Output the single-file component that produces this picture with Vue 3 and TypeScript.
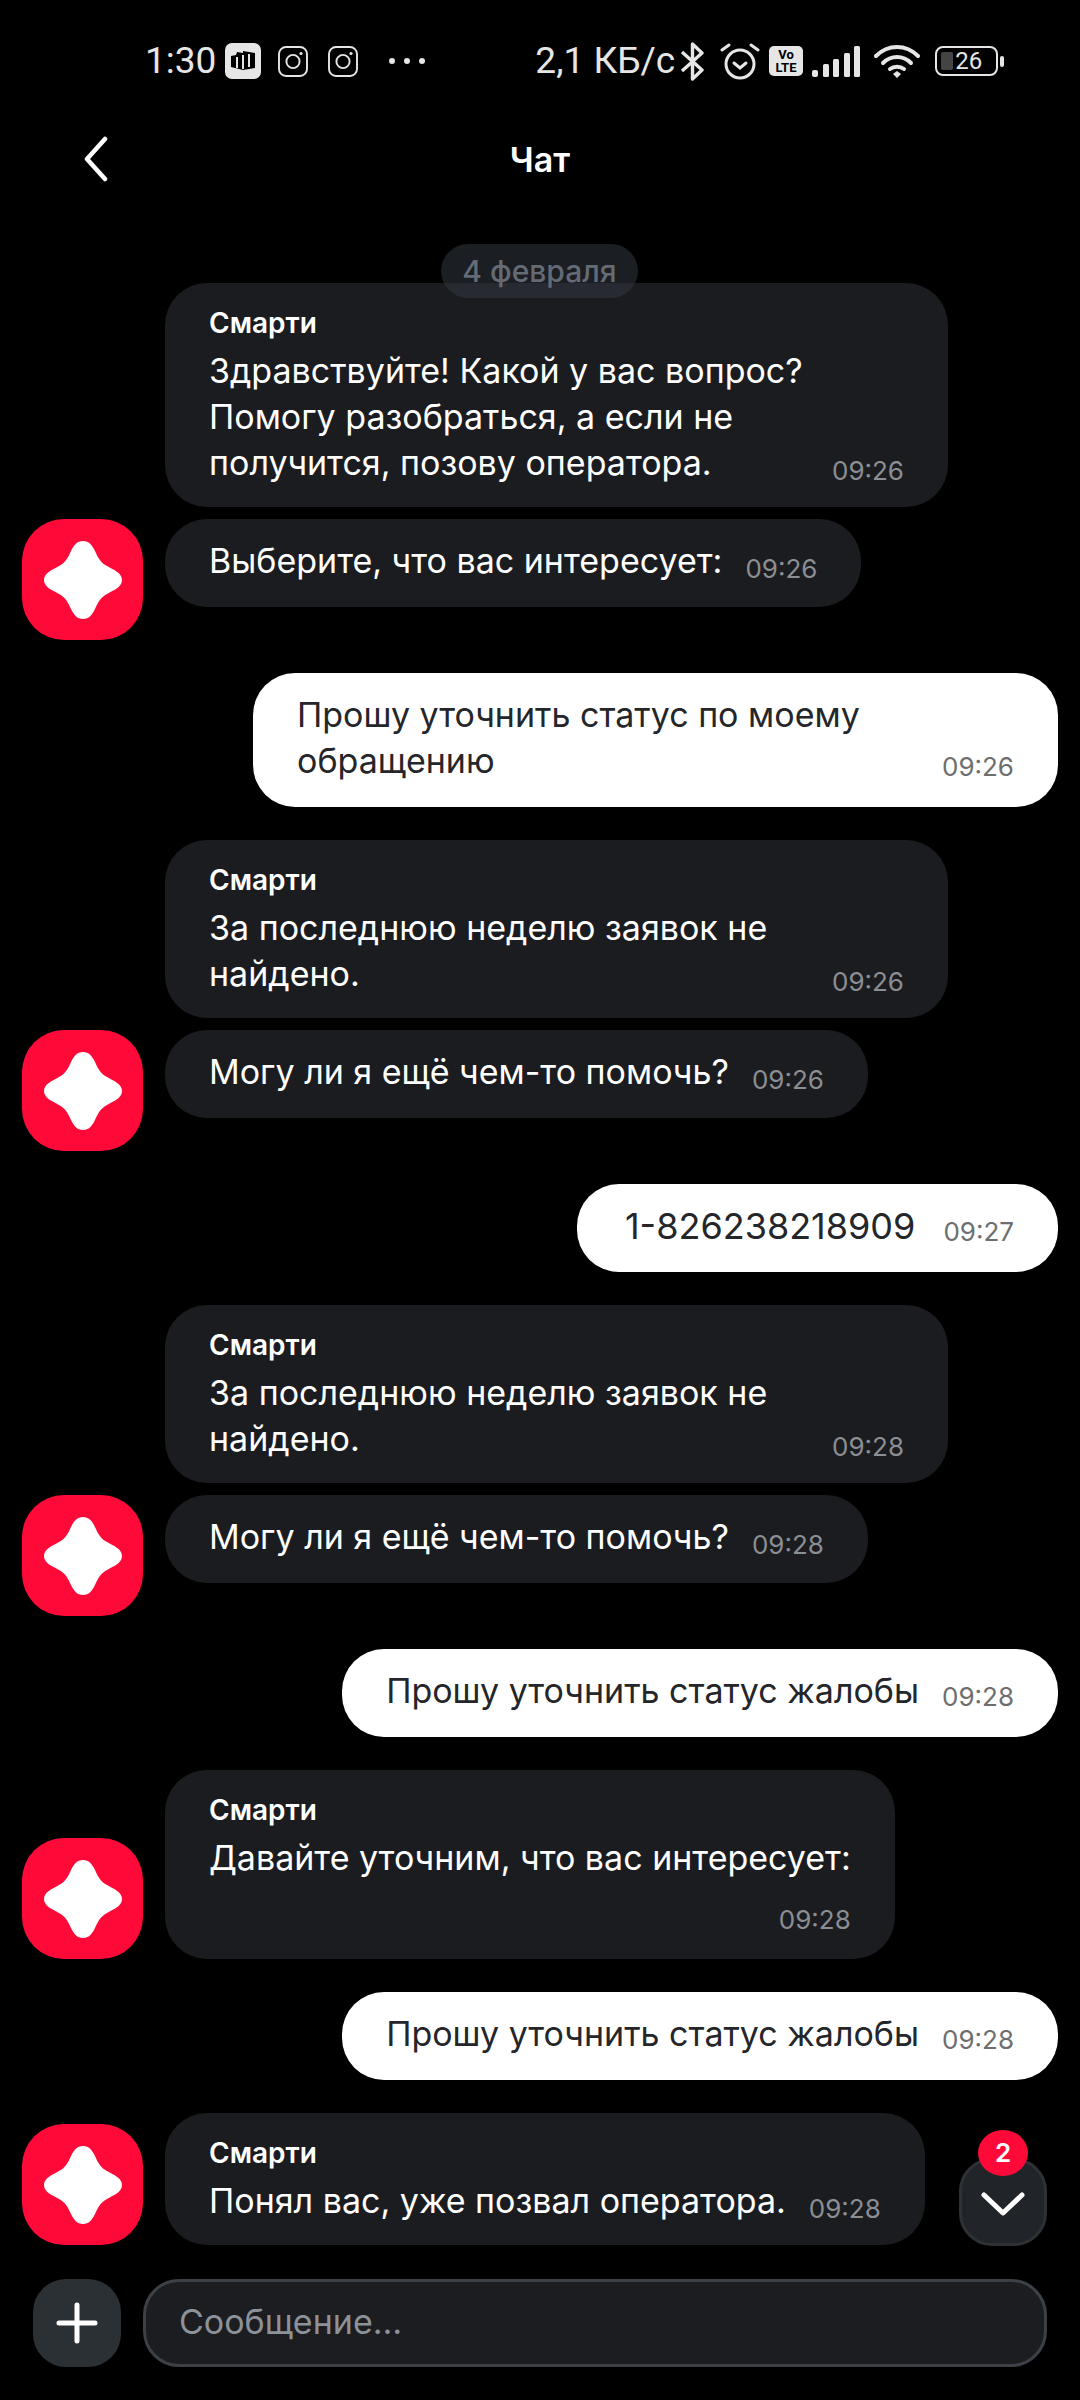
<script setup lang="ts">
interface Bubble {
  name?: string
  lines: string[]
  time: string
  wide?: boolean
  stacked?: boolean
}
interface Item {
  mine?: boolean
  bubbles: Bubble[]
  short?: boolean
  wide?: boolean
  numeric?: boolean
  text?: string[]
  time?: string
}

const items: Item[] = [
  {
    short: true,
    bubbles: [
      { name: 'Смарти', lines: ['Здравствуйте! Какой у вас вопрос?', 'Помогу разобраться, а если не', 'получится, позову оператора.'], time: '09:26', wide: true },
      { lines: ['Выберите, что вас интересует:'], time: '09:26' },
    ],
  },
  { mine: true, wide: true, bubbles: [], text: ['Прошу уточнить статус по моему', 'обращению'], time: '09:26' },
  {
    short: true,
    bubbles: [
      { name: 'Смарти', lines: ['За последнюю неделю заявок не', 'найдено.'], time: '09:26', wide: true },
      { lines: ['Могу ли я ещё чем-то помочь?'], time: '09:26' },
    ],
  },
  { mine: true, numeric: true, bubbles: [], text: ['1-826238218909'], time: '09:27' },
  {
    short: true,
    bubbles: [
      { name: 'Смарти', lines: ['За последнюю неделю заявок не', 'найдено.'], time: '09:28', wide: true },
      { lines: ['Могу ли я ещё чем-то помочь?'], time: '09:28' },
    ],
  },
  { mine: true, bubbles: [], text: ['Прошу уточнить статус жалобы'], time: '09:28' },
  {
    bubbles: [{ name: 'Смарти', lines: ['Давайте уточним, что вас интересует:'], time: '09:28', stacked: true }],
  },
  { mine: true, bubbles: [], text: ['Прошу уточнить статус жалобы'], time: '09:28' },
  {
    bubbles: [{ name: 'Смарти', lines: ['Понял вас, уже позвал оператора.'], time: '09:28' }],
  },
]

const star = 'M39 0C45 0 48 4 51 10C54 17 57 22 63 25C70 29 78 32 78 39C78 46 70 49 63 53C57 56 54 61 51 68C48 74 45 78 39 78C33 78 30 74 27 68C24 61 21 56 15 53C8 49 0 46 0 39C0 32 8 29 15 25C21 22 24 17 27 10C30 4 33 0 39 0Z'
</script>

<template>
  <div class="page">
    <div class="status">
      <span class="clock">1:30</span>
      <svg class="mi" width="36" height="36" viewBox="0 0 36 36">
        <rect width="36" height="36" rx="7" fill="#e6e6e6" />
        <path d="M6 13l5-1 1-3 6 1 0-2 12 2v15l-12 2-12-3z" fill="#000" />
        <path d="M12 14v11M18 12v14M24 11v13" stroke="#e6e6e6" stroke-width="2" fill="none" />
      </svg>
      <svg class="insta" width="30" height="31" viewBox="0 0 30 31" fill="none" stroke="#e6e6e6" stroke-width="1.9">
        <rect x="1" y="1" width="28" height="29" rx="7" />
        <circle cx="15" cy="15.5" r="6.6" />
        <circle cx="23" cy="7.5" r="1.6" fill="#e6e6e6" stroke="none" />
      </svg>
      <svg class="insta second" width="30" height="31" viewBox="0 0 30 31" fill="none" stroke="#e6e6e6" stroke-width="1.9">
        <rect x="1" y="1" width="28" height="29" rx="7" />
        <circle cx="15" cy="15.5" r="6.6" />
        <circle cx="23" cy="7.5" r="1.6" fill="#e6e6e6" stroke="none" />
      </svg>
      <svg class="dots" width="36" height="8" viewBox="0 0 36 8" fill="#e6e6e6">
        <circle cx="3" cy="4" r="3" />
        <circle cx="18" cy="4" r="3" />
        <circle cx="33" cy="4" r="3" />
      </svg>
      <span class="speed">2,1 КБ/с</span>
      <svg class="bt" width="25" height="39" viewBox="0 0 25 39" fill="none" stroke="#e6e6e6" stroke-width="3.4" stroke-linejoin="round">
        <path d="M2 10l20 18-9.500 9V2l9.500 9L2 29" />
      </svg>
      <svg class="alarm" width="40" height="37" viewBox="0 0 40 37" fill="none" stroke="#e6e6e6" stroke-width="3" stroke-linecap="round">
        <circle cx="20" cy="21" r="14" />
        <path d="M14 20l6 5 6-5" />
        <path d="M2 7l7-5M38 7l-7-5" />
      </svg>
      <svg class="volte" width="34" height="30" viewBox="0 0 34 30">
        <rect width="34" height="30" rx="5" fill="#e6e6e6" />
        <text x="17" y="13" text-anchor="middle" class="volte-text">Vo</text>
        <text x="17" y="26" text-anchor="middle" class="volte-text">LTE</text>
      </svg>
      <svg class="signal" width="48" height="31" viewBox="0 0 48 31" fill="#e6e6e6">
        <rect x="0" y="24" width="6" height="7" rx="2" />
        <rect x="11" y="18" width="6" height="13" rx="1.500" />
        <rect x="21" y="13" width="6" height="18" rx="1.500" />
        <rect x="32" y="7" width="6" height="24" rx="1.500" />
        <rect x="42" y="0" width="6" height="31" rx="1.500" />
      </svg>
      <svg class="wifi" width="46" height="34" viewBox="0 0 46 34" fill="none" stroke="#e6e6e6" stroke-width="4" stroke-linecap="round">
        <path d="M2 12C14 0 32 0 44 12" />
        <path d="M9 19C17 11 29 11 37 19" />
        <path d="M16 25C20 22 26 22 30 25" />
        <path d="M19 30l4-3 4 3-4 4z" fill="#e6e6e6" stroke="none" />
      </svg>
      <div class="battery">
        <span class="level"></span>
        <span class="pct">26</span>
      </div>
      <span class="nub"></span>
    </div>

    <div class="topbar">
      <svg class="back" width="24" height="46" viewBox="0 0 24 46" fill="none" stroke="#fff" stroke-width="4.500" stroke-linecap="round" stroke-linejoin="round">
        <path d="M21 3L3 23l18 20" />
      </svg>
      <span class="title">Чат</span>
    </div>

    <div class="date">4 февраля</div>

    <div class="messages">
      <template v-for="(item, i) in items" :key="i">
        <div v-if="item.mine" class="mine" :class="{ wide: item.wide, numeric: item.numeric }">
          <div class="body">
            <div class="text">
              <div v-for="line in item.text" :key="line">{{ line }}</div>
            </div>
            <span class="time">{{ item.time }}</span>
          </div>
        </div>

        <div v-else class="group">
          <div
            v-for="(b, j) in item.bubbles"
            :key="j"
            class="row"
            :class="{ short: item.short && j === item.bubbles.length - 1 }"
          >
            <div class="slot">
              <div v-if="j === item.bubbles.length - 1" class="avatar">
                <svg width="78" height="78" viewBox="0 0 78 78"><path :d="star" fill="#fff" /></svg>
              </div>
            </div>
            <div class="bubble" :class="{ wide: b.wide }">
              <div v-if="b.name" class="name">{{ b.name }}</div>
              <div class="body" :class="{ stacked: b.stacked }">
                <div class="text">
                  <div v-for="line in b.lines" :key="line">{{ line }}</div>
                </div>
                <span class="time">{{ b.time }}</span>
              </div>
            </div>
          </div>
        </div>
      </template>
    </div>

    <div class="scroll-down">
      <span class="badge">2</span>
      <svg width="44" height="24" viewBox="0 0 44 24" fill="none" stroke="#fff" stroke-width="5" stroke-linecap="round" stroke-linejoin="round">
        <path d="M3 3l19 18L41 3" />
      </svg>
    </div>

    <div class="composer">
      <div class="plus">
        <svg width="42" height="42" viewBox="0 0 42 42" stroke="#fff" stroke-width="5" stroke-linecap="round">
          <path d="M21 3v36M3 21h36" />
        </svg>
      </div>
      <div class="field">Сообщение…</div>
    </div>
  </div>
</template>

<style>
html,
body {
  margin: 0;
  background: #000;
}
</style>

<style scoped>
.page {
  position: relative;
  width: 1080px;
  height: 2400px;
  overflow: hidden;
  background: #000;
  color: #fff;
  font-family: Inter, "Liberation Sans", sans-serif;
}

/* status bar */
.status {
  display: flex;
  align-items: center;
  height: 122px;
  padding-left: 145px;
  box-sizing: border-box;
  color: #e6e6e6;
  font-family: Roboto, sans-serif;
}
.clock,
.speed {
  font-size: 37px;
  line-height: 44px;
}
.mi {
  margin-left: 9px;
}
.insta {
  margin-left: 17px;
}
.insta.second {
  margin-left: 20px;
}
.dots {
  margin-left: 31px;
}
.speed {
  margin-left: 110px;
}
.bt {
  margin-left: 5px;
}
.alarm {
  margin-left: 15px;
}
.volte {
  margin-left: 9px;
}
.volte-text {
  font-size: 13px;
  font-weight: 700;
  fill: #000;
}
.signal {
  margin-left: 9px;
}
.wifi {
  margin-left: 14px;
}
.battery {
  position: relative;
  display: flex;
  align-items: center;
  justify-content: center;
  margin-left: 15px;
  width: 63px;
  height: 30px;
  box-sizing: border-box;
  border: 2.500px solid #e6e6e6;
  border-radius: 8px;
}
.level {
  position: absolute;
  left: 4px;
  top: 4px;
  bottom: 4px;
  width: 12px;
  border-radius: 2px;
  background: #444;
}
.pct {
  position: relative;
  font-size: 24px;
  line-height: 24px;
  margin-left: 4px;
}
.nub {
  width: 4px;
  height: 11px;
  margin-left: 2px;
  border-radius: 2px;
  background: #e6e6e6;
}

/* header */
.topbar {
  position: relative;
  display: flex;
  align-items: center;
  justify-content: center;
  height: 74px;
}
.back {
  position: absolute;
  left: 84px;
  top: 14px;
}
.title {
  font-size: 34px;
  font-weight: 600;
}

/* date chip floats above the first bubble */
.date {
  position: absolute;
  left: 441px;
  top: 244px;
  width: 197px;
  height: 54px;
  line-height: 54px;
  text-align: center;
  border-radius: 27px;
  background: rgba(50, 55, 62, 0.55);
  color: #646b75;
  font-size: 30px;
  font-weight: 500;
  z-index: 2;
}

.messages {
  display: flex;
  flex-direction: column;
  gap: 33px;
  padding-top: 87px;
}

.group {
  display: flex;
  flex-direction: column;
  gap: 12px;
}
.row {
  display: flex;
  align-items: flex-end;
  gap: 22px;
  padding-left: 22px;
}
.row.short {
  align-items: flex-start;
  min-height: 121px;
}
.slot {
  flex: none;
  width: 121px;
}
.avatar {
  display: flex;
  align-items: center;
  justify-content: center;
  width: 121px;
  height: 121px;
  border-radius: 42px;
  background: #ff0a38;
}

.bubble,
.mine {
  box-sizing: border-box;
  padding: 19px 44px 23px;
  border-radius: 42px;
}
.bubble {
  background: #1b1c20;
}
.bubble.wide {
  width: 783px;
}
.mine {
  align-self: flex-end;
  margin-right: 22px;
  background: #fff;
  color: #24262a;
}
.mine.wide {
  width: 805px;
}
.mine.numeric {
  padding-left: 48px;
}
.mine.numeric .text {
  font-size: 36px;
}
.mine.numeric .body {
  gap: 28px;
}
.name {
  margin-top: 3px;
  margin-bottom: 7px;
  font-size: 28px;
  line-height: 36px;
  font-weight: 600;
}
.name + .body {
  margin-bottom: -2px;
}
.body {
  display: flex;
  justify-content: space-between;
  align-items: flex-end;
  gap: 23px;
}
.body.stacked {
  flex-direction: column;
  align-items: flex-end;
  gap: 21px;
}
.text {
  font-size: 34px;
  line-height: 46px;
  white-space: nowrap;
}
.time {
  flex: none;
  margin-bottom: -3px;
  font-size: 26px;
  line-height: 36px;
  color: #8b8e93;
}
.body.stacked .time {
  margin-bottom: 0;
}
.mine .time {
  margin-bottom: -1px;
  color: #6e6e6e;
}

/* scroll to bottom */
.scroll-down {
  position: absolute;
  left: 959px;
  top: 2158px;
  display: flex;
  align-items: center;
  justify-content: center;
  width: 88px;
  height: 88px;
  box-sizing: border-box;
  padding-top: 4px;
  border: 3px solid #2e3236;
  border-radius: 33px;
  background: #212529;
}
.badge {
  position: absolute;
  left: 16px;
  top: -31px;
  width: 50px;
  height: 46px;
  line-height: 46px;
  text-align: center;
  border-radius: 50%;
  background: #ff0a38;
  color: #fff;
  font-size: 26px;
  font-weight: 600;
}

/* bottom input */
.composer {
  position: absolute;
  left: 33px;
  top: 2279px;
  display: flex;
  gap: 22px;
  width: 1014px;
}
.plus {
  display: flex;
  flex: none;
  align-items: center;
  justify-content: center;
  width: 88px;
  height: 88px;
  border-radius: 33px;
  background: #2b3035;
}
.field {
  flex: 1;
  box-sizing: border-box;
  height: 88px;
  line-height: 80px;
  padding-left: 33px;
  border: 3px solid #3c4147;
  border-radius: 36px;
  background: #1b1d21;
  color: #8d9198;
  font-size: 34px;
}
</style>
